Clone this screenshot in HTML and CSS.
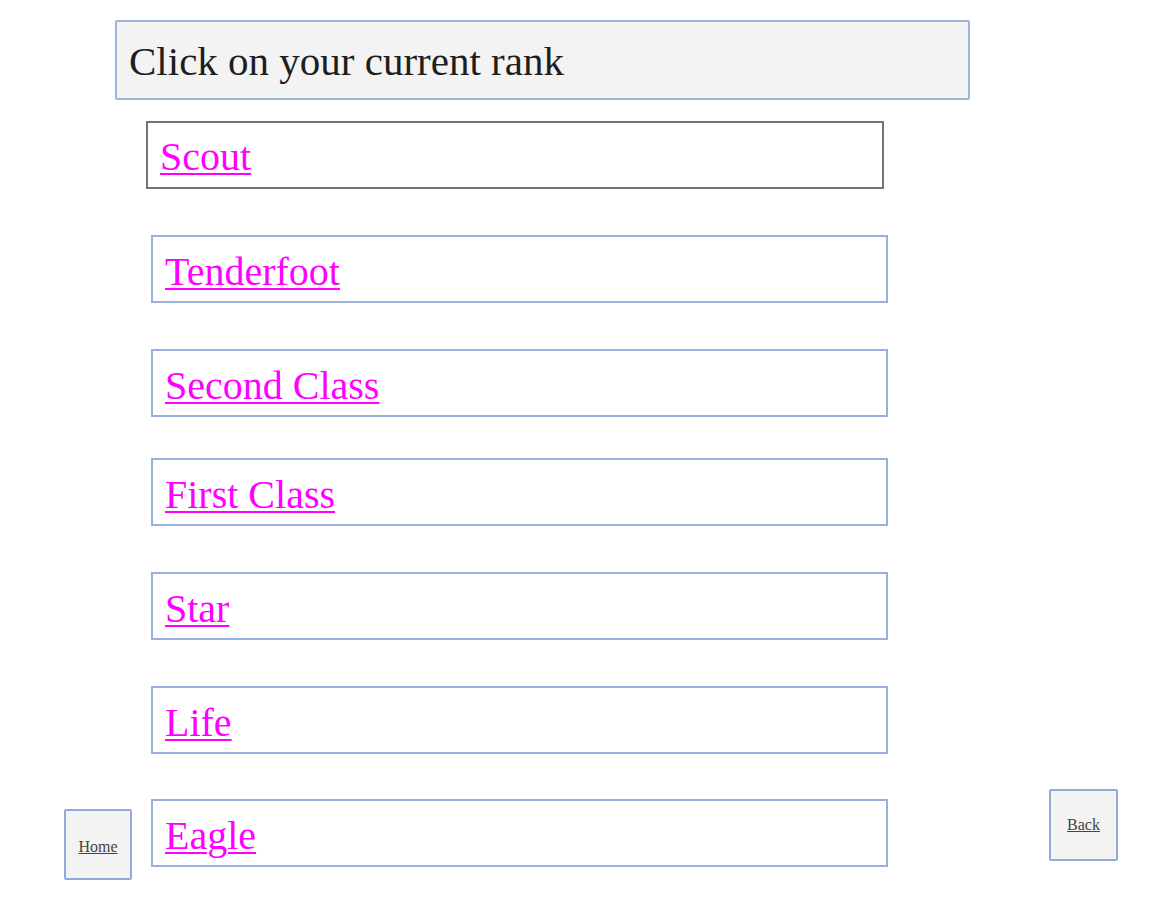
FILE: index.html
```html
<!DOCTYPE html>
<html lang="en">
<head>
<meta charset="utf-8">
<title>Select Rank</title>
<link rel="stylesheet" href="styles.css">
</head>
<body>
<main class="page">
  <div class="title">Click on your current rank</div>
  <ul class="ranks">
    <li class="rank rank-current"><a href="#">Scout</a></li>
    <li class="rank"><a href="#">Tenderfoot</a></li>
    <li class="rank"><a href="#">Second Class</a></li>
    <li class="rank rank-tight"><a href="#">First Class</a></li>
    <li class="rank"><a href="#">Star</a></li>
    <li class="rank"><a href="#">Life</a></li>
  </ul>
  <div class="bottom-row">
    <a class="nav-btn nav-home" href="#">Home</a>
    <div class="rank rank-last"><a href="#">Eagle</a></div>
    <a class="nav-btn nav-back" href="#">Back</a>
  </div>
</main>
</body>
</html>
```

FILE: styles.css
```css
html, body {
  margin: 0;
  padding: 0;
  background: #ffffff;
}

body {
  font-family: "Liberation Serif", "Times New Roman", serif;
  color: #222222;
}

.page {
  padding-top: 20px;
}

.title {
  box-sizing: border-box;
  margin-left: 115px;
  width: 855px;
  height: 80px;
  background: #f3f3f3;
  border: 2px solid #9fb3dc;
  border-radius: 2px;
  padding: 17px 12px 0;
  font-size: 41px;
  line-height: 1.107;
  color: #1e1e1e;
}

.ranks {
  list-style: none;
  margin: 21px 0 0 151px;
  padding: 0;
  display: flex;
  flex-direction: column;
  gap: 46px;
}

.rank {
  box-sizing: border-box;
  width: 737px;
  height: 68px;
  border: 2px solid #9ab0dc;
  background: #ffffff;
  padding: 13px 12px 0;
  font-size: 40px;
  line-height: 1.107;
}

.rank a {
  color: #ff00ff;
  text-decoration: underline;
  text-decoration-thickness: 2px;
  text-underline-offset: 3px;
}

.rank-current {
  margin-left: -5px;
  width: 738px;
  padding-top: 12px;
  border-color: #747474;
}

.rank-tight {
  margin-top: -5px;
}

.bottom-row {
  display: flex;
  align-items: flex-start;
  margin-top: 45px;
  padding-left: 64px;
}

.rank-last {
  margin-left: 19px;
}

.nav-btn {
  box-sizing: border-box;
  display: flex;
  align-items: center;
  justify-content: center;
  width: 69px;
  height: 71px;
  background: #f3f3f3;
  border: 2px solid #93abda;
  border-radius: 2px;
  font-size: 16px;
  color: #444444;
  text-decoration: underline;
}

.nav-home {
  margin-top: 10px;
  width: 68px;
  padding-top: 4px;
}

.nav-back {
  margin-left: 161px;
  margin-top: -10px;
  height: 72px;
}
```
